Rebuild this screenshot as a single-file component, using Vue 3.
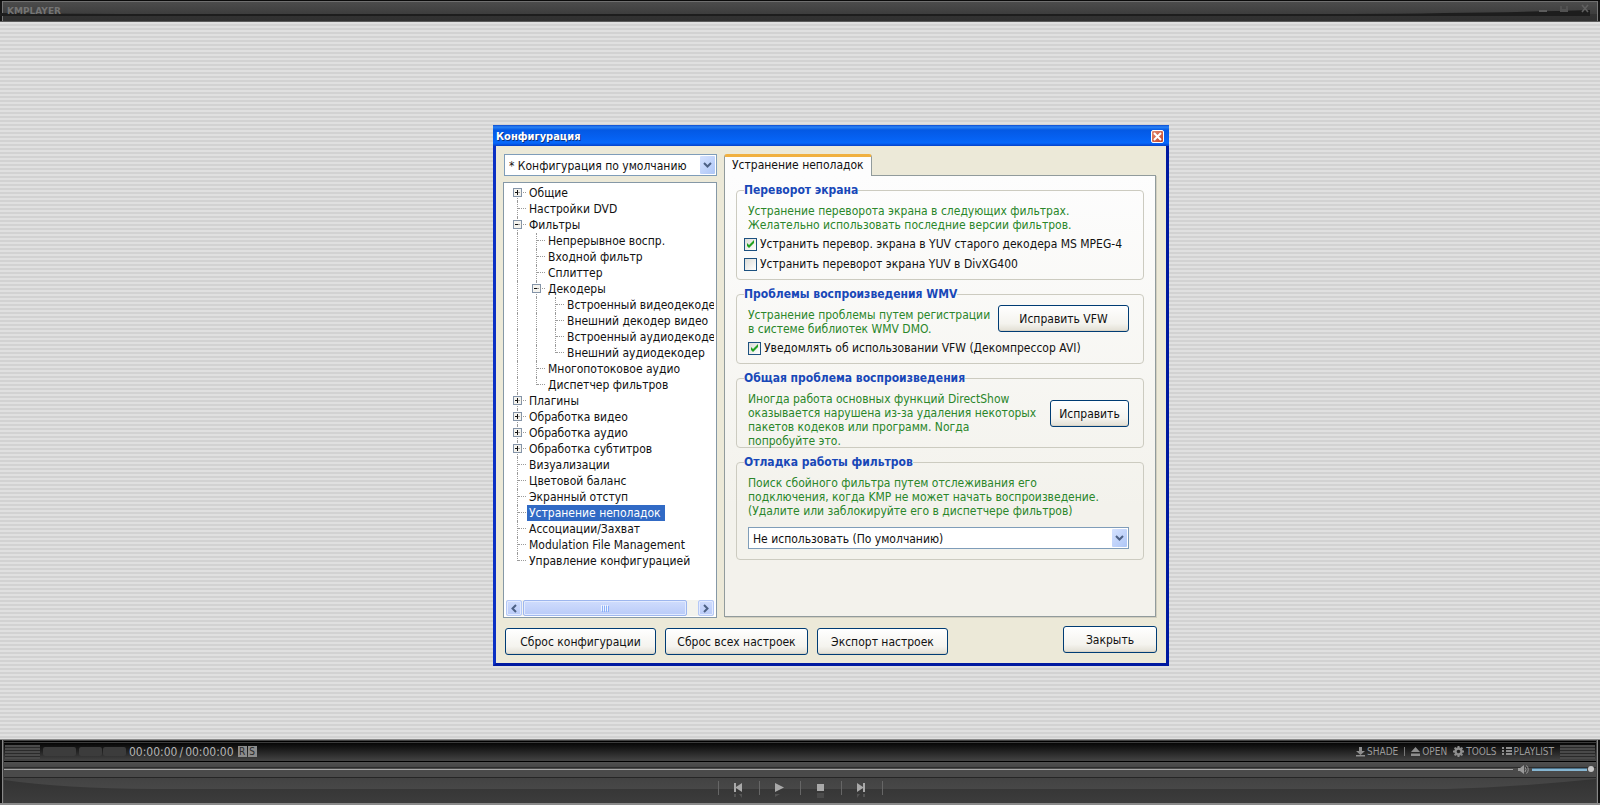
<script setup>
import { ref } from 'vue'

const rows = [
  { g: 'P', t: 'Общие', first: true },
  { g: 't', t: 'Настройки DVD' },
  { g: 'M', t: 'Фильтры' },
  { g: '|t', t: 'Непрерывное воспр.' },
  { g: '|t', t: 'Входной фильтр' },
  { g: '|t', t: 'Сплиттер' },
  { g: '|M', t: 'Декодеры' },
  { g: '||t', t: 'Встроенный видеодекодер' },
  { g: '||t', t: 'Внешний декодер видео' },
  { g: '||t', t: 'Встроенный аудиодекодер' },
  { g: '||l', t: 'Внешний аудиодекодер' },
  { g: '|t', t: 'Многопотоковое аудио' },
  { g: '|l', t: 'Диспетчер фильтров' },
  { g: 'P', t: 'Плагины' },
  { g: 'P', t: 'Обработка видео' },
  { g: 'P', t: 'Обработка аудио' },
  { g: 'P', t: 'Обработка субтитров' },
  { g: 't', t: 'Визуализации' },
  { g: 't', t: 'Цветовой баланс' },
  { g: 't', t: 'Экранный отступ' },
  { g: 't', t: 'Устранение неполадок' },
  { g: 't', t: 'Ассоциации/Захват' },
  { g: 't', t: 'Modulation File Management' },
  { g: 'l', t: 'Управление конфигурацией' },
]
const selected = ref('Устранение неполадок')
const kind = { '|': 'bar', t: 'tee', l: 'elbow', P: 'tee', M: 'tee' }
const oldDecoder = ref(true)
const divx = ref(false)
const notify = ref(true)
</script>

<template>
  <div class="player">
    <header class="top">
      <svg class="sheen" viewBox="0 0 1600 20" preserveAspectRatio="none" aria-hidden="true">
        <path d="M0 12 Q60 13 200 13 L1350 13 Q1500 12 1590 9 L1590 15 L0 15Z" fill="#1d1d1d" />
      </svg>
      <span class="brand">KMPLAYER</span>
      <div class="wins">
        <button aria-label="Свернуть"><svg width="9" height="9"><path d="M0 6h8v2H0z" fill="#5c5c5c" /></svg></button>
        <button aria-label="Развернуть"><svg width="9" height="9"><path d="M0 2h2v3h4V2h2v6H0z" fill="#525252" /></svg></button>
        <button aria-label="Выход"><svg width="9" height="9"><path d="M1 1l6 7M7 1L1 8" stroke="#606060" stroke-width="1.6" /></svg></button>
      </div>
    </header>

    <main class="stage">
      <section class="dialog" role="dialog" aria-labelledby="dlg-title">
        <div class="caption">
          <h1 id="dlg-title">Конфигурация</h1>
          <button class="x" aria-label="Закрыть окно">
            <svg width="11" height="11"><path d="M2 2l7 7M9 2L2 9" stroke="#fff" stroke-width="2" /></svg>
          </button>
        </div>

        <div class="body">
          <div class="left">
            <div class="combo">
              <select aria-label="Профиль"><option>* Конфигурация по умолчанию</option></select>
              <span class="arrow"><svg width="9" height="7"><path d="M1 1l3.5 3.5L8 1" fill="none" stroke="#4d6185" stroke-width="2" /></svg></span>
            </div>
            <div class="tree">
              <ul role="tree" aria-label="Разделы">
                <li v-for="r in rows" :key="r.t" role="treeitem" :aria-selected="r.t === selected" @click="selected = r.t">
                  <span v-for="(c, i) in r.g.split('')" :key="i" class="cell" :class="[kind[c], { first: r.first }]">
                    <svg v-if="c === 'P' || c === 'M'" width="9" height="10">
                      <rect x="0.5" y="0.5" width="8" height="8" fill="#f4f3ee" stroke="#8494a8" />
                      <path :d="c === 'P' ? 'M2 4.5h5M4.5 2v5' : 'M2 4.5h5'" stroke="#111" />
                    </svg>
                  </span>
                  <span class="name" :class="{ on: r.t === selected }">{{ r.t }}</span>
                </li>
              </ul>
              <div class="hscroll">
                <button aria-label="Влево"><svg width="8" height="9"><path d="M6 1L2.5 4.5 6 8" fill="none" stroke="#4d6185" stroke-width="2" /></svg></button>
                <span class="thumb"><svg width="8" height="7"><path d="M0.5 0v6M2.5 0v6M4.5 0v6M6.5 0v6" stroke="#eef4fe" /><path d="M1.5 1v6M3.5 1v6M5.5 1v6M7.5 1v6" stroke="#8cb0f8" /></svg></span>
                <button aria-label="Вправо"><svg width="8" height="9"><path d="M2 1l3.5 3.5L2 8" fill="none" stroke="#4d6185" stroke-width="2" /></svg></button>
              </div>
            </div>
          </div>

          <div class="right">
            <button class="tab" role="tab" aria-selected="true">Устранение неполадок</button>
            <div class="panel">
              <fieldset class="g1">
                <legend>Переворот экрана</legend>
                <p>Устранение переворота экрана в следующих фильтрах.<br />Желательно использовать последние версии фильтров.</p>
                <label class="check out"><span class="box"><input v-model="oldDecoder" type="checkbox" /><svg width="9" height="9"><path d="M1 3v3l2 2 5-5V0L3 5z" fill="#21a121" /></svg></span>Устранить перевор. экрана в YUV старого декодера MS MPEG-4</label>
                <label class="check out"><span class="box"><input v-model="divx" type="checkbox" /><svg width="9" height="9"><path d="M1 3v3l2 2 5-5V0L3 5z" fill="#21a121" /></svg></span>Устранить переворот экрана YUV в DivXG400</label>
              </fieldset>
              <fieldset class="g2">
                <legend>Проблемы воспроизведения WMV</legend>
                <div class="line">
                  <p>Устранение проблемы путем регистрации<br />в системе библиотек WMV DMO.</p>
                  <button class="btn vfw">Исправить VFW</button>
                </div>
                <label class="check"><span class="box"><input v-model="notify" type="checkbox" /><svg width="9" height="9"><path d="M1 3v3l2 2 5-5V0L3 5z" fill="#21a121" /></svg></span>Уведомлять об использовании VFW (Декомпрессор AVI)</label>
              </fieldset>
              <fieldset class="g3">
                <legend>Общая проблема воспроизведения</legend>
                <div class="line">
                  <p>Иногда работа основных функций DirectShow<br />оказывается нарушена из-за удаления некоторых<br />пакетов кодеков или программ. Nогда<br />попробуйте это.</p>
                  <button class="btn fix">Исправить</button>
                </div>
              </fieldset>
              <fieldset class="g4">
                <legend>Отладка работы фильтров</legend>
                <p>Поиск сбойного фильтра путем отслеживания его<br />подключения, когда KMP не может начать воспроизведение.<br />(Удалите или заблокируйте его в диспетчере фильтров)</p>
                <div class="combo">
                  <select aria-label="Отладка"><option>Не использовать (По умолчанию)</option></select>
                  <span class="arrow"><svg width="9" height="7"><path d="M1 1l3.5 3.5L8 1" fill="none" stroke="#4d6185" stroke-width="2" /></svg></span>
                </div>
              </fieldset>
            </div>
          </div>
        </div>

        <div class="actions">
          <button class="btn a1">Сброс конфигурации</button>
          <button class="btn a2">Сброс всех настроек</button>
          <button class="btn a3">Экспорт настроек</button>
          <button class="btn a4">Закрыть</button>
        </div>
      </section>
    </main>

    <footer class="bottom">
      <div class="display">
        <span class="ribs"></span>
        <span class="pad p1"></span><span class="pad p2"></span><span class="pad p3"></span>
        <span class="time"><span>00:00:00</span><span>/</span><span>00:00:00</span></span>
        <span class="flag">R</span><span class="flag">S</span>
        <nav>
          <button class="m1"><svg width="9" height="10"><path d="M3 0h3v4h3L4.500 8 0 4h3zM0 8h9v1.500H0z" fill="#8e8e8e" /></svg>SHADE</button>
          <i></i>
          <button class="m2"><svg width="9" height="10"><path d="M4.500 0L9 5H0zM0 6.500h9V9H0z" fill="#8e8e8e" /></svg>OPEN</button>
          <button class="m3"><svg width="11" height="11"><circle cx="5.500" cy="5.500" r="3" fill="none" stroke="#8e8e8e" stroke-width="2.400" /><path d="M5.500 0v2M5.500 9v2M0 5.500h2M9 5.500h2M1.600 1.600L3 3M8 8l1.400 1.400M9.400 1.600L8 3M3 8L1.600 9.400" stroke="#8e8e8e" stroke-width="2" /></svg>TOOLS</button>
          <button class="m4"><svg width="10" height="9"><path d="M0 0h2v2H0zM4 0h6v2H4zM0 3h2v2H0zM4 3h6v2H4zM0 6h2v2H0zM4 6h6v2H4z" fill="#8e8e8e" /></svg>PLAYLIST</button>
        </nav>
        <span class="ribs end"></span>
      </div>
      <div class="seek">
        <span class="track"></span>
        <svg width="11" height="9"><path d="M0 3h2l4-3v9L2 6H0z" fill="#999" /><path d="M7 2q2 2.500 0 5M8.500 0.500q3.500 4 0 8" fill="none" stroke="#999" /></svg>
        <span class="vol"></span><span class="knob"></span>
      </div>
      <div class="controls">
        <svg class="sheen" viewBox="0 0 1600 25" preserveAspectRatio="none" aria-hidden="true">
          <defs><linearGradient id="lo" x1="0" y1="0" x2="0" y2="1"><stop offset="0" stop-color="#333" /><stop offset="1" stop-color="#3c3c3c" /></linearGradient></defs>
          <path d="M0 2 Q60 10.500 150 11 L1450 11 Q1520 9 1600 1 L1600 25 L0 25Z" fill="url(#lo)" />
        </svg>
        <div class="keys">
          <button aria-label="Назад"><svg width="9" height="17"><path d="M0 0h2v4l6-4v9L2 5v4H0z" fill="#a9a9a9" /><path d="M0 11h2v3H0zM5 11h3v4z" fill="#545454" /></svg></button>
          <button aria-label="Воспроизвести"><svg width="9" height="17"><path d="M0 0l9 4.500L0 9z" fill="#a9a9a9" /><path d="M0 11h5l-5 3z" fill="#545454" /></svg></button>
          <button aria-label="Стоп"><svg width="9" height="17"><path d="M1 1h7v7H1z" fill="#a9a9a9" /><path d="M1 10h7v5H1z" fill="#4a4a4a" /></svg></button>
          <button aria-label="Вперёд"><svg width="9" height="17"><path d="M0 0l6 4V0h2v9H6V5L0 9z" fill="#a9a9a9" /><path d="M6 11h2v3H6zM0 11h3l-3 4z" fill="#545454" /></svg></button>
        </div>
      </div>
    </footer>
  </div>
</template>

<style>
html, body { margin: 0; background: #000; }
</style>

<style scoped>
.player {
  display: flex; flex-direction: column; min-height: 100vh;
  font: 12px/16px "DejaVu Sans Condensed", "DejaVu Sans", sans-serif; color: #111;
}
.player * { box-sizing: border-box; }
button { font: inherit; color: inherit; border: 0; padding: 0; background: none; }
svg { display: block; flex: none; }
.top {
  position: relative; display: flex; align-items: center; justify-content: space-between;
  height: 22px; padding: 0 10px 0 7px; border-top: 1px solid #0a0a0a; border-bottom: 1px solid #5c5c5c;
  background: linear-gradient(#707070 0 1px, #4c4c4c 1px, #3d3d3d 13px, #333 13px, #303030);
  box-shadow: inset 2px 0 #161616, inset 3px 0 #777, inset -2px 0 #161616, inset -3px 0 #777;
}
.sheen { position: absolute; inset: 0; width: 100%; height: 100%; }
.brand { position: relative; font: bold 9px/10px "DejaVu Sans", sans-serif; color: #747474; }
.wins { position: relative; display: flex; gap: 12px; padding-bottom: 5px; }
.stage {
  position: relative; flex: 1; min-height: 717px;
  background: repeating-linear-gradient(#e0e0e0 0 2px, #d2d2d2 2px 4px);
}
.dialog {
  position: absolute; left: calc(50% - 307px); top: 103px; width: 676px;
  border: 3px solid #0c31c4; border-top: 0; border-right-color: #0019a0; border-bottom-color: #0019a0;
  border-radius: 2px 2px 0 0; background: #ece9d8;
}
.caption {
  display: flex; align-items: center; justify-content: space-between; height: 21px; margin: 0 -3px; padding: 2px 5px 0 3px;
  background: linear-gradient(#0b4ad0, #2a83f5 2px, #0459e4 5px, #0560f0 12px, #0668fb 18px, #0440c8);
}
h1 { margin: 0; font-size: 11px; line-height: 16px; font-weight: bold; color: #fff; text-shadow: 1px 1px #0a3080; }
.x {
  display: grid; place-items: center; width: 13px; height: 13px; border: 1px solid #fff; border-radius: 2px;
  background: linear-gradient(135deg, #e38a70, #c3452a);
}
.body { display: grid; grid-template-columns: 214px 1fr; gap: 7px; padding: 8px 10px 0 7px; }
.left { display: flex; flex-direction: column; gap: 6px; }
.left .combo { margin-left: 1px; }
.combo { position: relative; height: 22px; }
select {
  appearance: none; display: block; width: 100%; height: 22px; padding: 1px 20px 0 4px; border: 1px solid #7f9db9; border-radius: 0;
  background: #fff; font: inherit; color: #111;
}
.arrow {
  position: absolute; right: 2px; top: 2px; width: 15px; height: 18px; display: grid; place-items: center; pointer-events: none;
  border-radius: 1px; background: linear-gradient(135deg, #d5e2ff, #aec6f6);
}
.tree {
  display: flex; flex-direction: column; flex: 1; justify-content: space-between; gap: 16px; padding: 2px 2px 1px;
  border: 1px solid #8598a6; background: #fff;
}
ul { list-style: none; margin: 0; padding: 0 0 0 2px; overflow: hidden; }
li { display: flex; height: 16px; white-space: nowrap; }
.cell { position: relative; flex: none; width: 19px; height: 16px; display: grid; place-items: center; }
.cell svg { position: relative; }
.cell::before { content: ""; position: absolute; left: 9px; top: 0; bottom: 0; border-left: 1px dotted #9a9a9a; }
.cell.elbow::before { bottom: 8px; }
.cell.first::before { top: 8px; }
.cell.tee::after, .cell.elbow::after { content: ""; position: absolute; left: 10px; right: 1px; top: 7px; border-top: 1px dotted #9a9a9a; }
.name { padding: 0 4px 0 2px; }
.name.on { background: #316ac5; color: #fff; }
.hscroll { display: flex; height: 16px; gap: 1px; background: #f3f3ee; }
.hscroll button, .thumb {
  display: grid; place-items: center; border: 1px solid #b4c8f6; border-radius: 2px;
  background: linear-gradient(#cfdcfd, #bacbf8); box-shadow: inset 0 0 0 1px #e2eafe;
}
.hscroll button { width: 16px; }
.thumb { flex: 1; margin-right: 10px; border-color: #9db6ee; }
.right { display: flex; flex-direction: column; align-items: flex-start; padding-bottom: 1px; }
.tab {
  position: relative; height: 22px; margin-bottom: -1px; padding: 0 7px 3px; border: 1px solid #919b9c; border-top: 3px solid #f0b040;
  border-bottom: 0; border-radius: 3px 3px 0 0; background: #fdfdfd;
}
.panel {
  display: flex; flex-direction: column; gap: 7px; align-self: stretch; min-height: 442px; padding: 7px 11px;
  border: 1px solid #919b9c; background: linear-gradient(#fdfdfd, #f3f2ec 75%); box-shadow: 1px 1px #d2cfbf;
}
fieldset { display: block; min-width: 0; margin: 0; padding: 0 14px 0 11px; border: 1px solid #cccbc0; border-radius: 4px; }
legend { margin-left: -4px; padding: 0; height: 14px; line-height: 14px; font-weight: bold; color: #1848b8; white-space: nowrap; }
p { margin: 0; padding-top: 7px; line-height: 14px; color: #2a862a; white-space: nowrap; }
.g1 { height: 97px; }
.g2, .g3 { height: 77px; }
.g4 { height: 105px; }
.line { display: flex; justify-content: space-between; align-items: flex-start; }
.check { display: flex; align-items: center; gap: 3px; height: 16px; white-space: nowrap; }
.check.out { margin: 4px 0 0 -4px; }
.g2 .check { margin-top: 4px; }
.box { position: relative; display: grid; place-items: center; width: 13px; height: 13px; }
.box input { grid-area: 1 / 1; appearance: none; width: 13px; height: 13px; margin: 0; border: 1px solid #1c5180; background: linear-gradient(135deg, #dcdcd7, #fff); }
.box svg { grid-area: 1 / 1; position: relative; visibility: hidden; pointer-events: none; }
.box input:checked + svg { visibility: visible; }
.btn {
  height: 27px; border: 1px solid #003c74; border-radius: 3px; background: linear-gradient(#fff, #f4f3ee 70%, #e2dfd4);
  white-space: nowrap; text-align: center; box-shadow: inset 0 -1px #d8d3c6;
}
.vfw { width: 131px; margin-top: 4px; }
.fix { width: 79px; margin-top: 15px; }
.g4 .combo { margin-top: 9px; }
.actions { display: flex; gap: 9px; padding: 10px 9px 8px; }
.a1 { width: 151px; }
.a2 { width: 143px; }
.a3 { width: 131px; }
.a4 { width: 94px; margin: -2px 0 2px auto; }

.bottom {
  height: 66px; padding: 1px 4px 0; border-top: 1px solid #8a8a8a; background: #444;
  border-bottom: 2px solid #8a8a8a; box-shadow: inset 2px 0 #111, inset 3px 0 #888, inset -2px 0 #111, inset -3px 0 #888;
}
.display {
  display: flex; align-items: center; height: 21px; border-top: 1px solid #000; border-bottom: 1px solid #000;
  background: linear-gradient(#3c3c3c 0 1px, #060606 1px, #444);
}
.ribs { width: 35px; height: 14px; margin: 0 3px 0 1px; background: repeating-linear-gradient(#4a4a4a 0 2px, #2a2a2a 2px 3px); }
.ribs.end { margin: 0 1px 0 6px; }
.pad { height: 9px; border-radius: 2px; background: #3c3c3c; }
.p1 { width: 33px; margin-right: 3px; }
.p2 { width: 23px; margin-right: 1px; }
.p3 { width: 23px; margin-right: 3px; }
.time { display: flex; gap: 2px; color: #b4b4b4; margin-right: 4px; }
.flag { width: 9px; height: 11px; margin-right: 1px; background: #8c8c8c; color: #2a2a2a; font-size: 10px; line-height: 11px; text-align: center; }
nav { display: flex; align-items: center; margin-left: auto; font-size: 10px; color: #9a9a9a; }
nav button { display: flex; align-items: center; gap: 2px; }
nav i { width: 1px; height: 9px; margin: 0 6px; background: #777; }
.m3 { margin: 0 5px 0 6px; }
.seek { display: flex; align-items: center; height: 16px; padding: 0 1px 2px 0; background: linear-gradient(#505050, #464646 5px, #2c2c2c 5px 6px, #4a4a4a 6px 15px, #262626 15px); }
.track { flex: 1; height: 1px; margin-right: 5px; background: #a6a6a6; }
.vol { width: 55px; height: 3px; margin-left: 3px; border-top: 1px solid #4a7088; background: #86b6d2; }
.knob { width: 6px; height: 6px; margin: 0 1px; border-radius: 50%; background: #c8c8c8; }
.controls { position: relative; height: 25px; background: linear-gradient(#434343, #484848 12px); }
.keys { position: relative; display: flex; justify-content: center; padding-top: 3px; }
.keys button { display: flex; justify-content: center; width: 41px; height: 14px; padding: 2px 0 0; border-left: 1px solid #666; }
.keys button:last-child { width: 42px; border-right: 1px solid #666; }
</style>
